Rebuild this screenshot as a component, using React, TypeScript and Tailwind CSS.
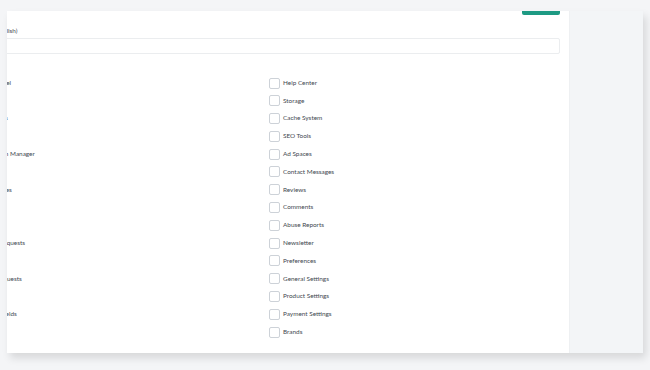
import React from "react";

const left = [
  "Shipping Panel",
  "Orders",
  "Subscriptions",
  "Users",
  "Configuration Manager",
  "Roles",
  "Top Categories",
  "Blog",
  "Media",
  "Withdraw Requests",
  "Staff",
  "Payment Requests",
  "Pages",
  "Additional Fields",
  "Themes",
];

const right = [
  "Help Center",
  "Storage",
  "Cache System",
  "SEO Tools",
  "Ad Spaces",
  "Contact Messages",
  "Reviews",
  "Comments",
  "Abuse Reports",
  "Newsletter",
  "Preferences",
  "General Settings",
  "Product Settings",
  "Payment Settings",
  "Brands",
];

function Item({ label }: { label: string }) {
  return (
    <div className="flex h-[11px] items-center">
      <span className="h-[11px] w-[11px] shrink-0 rounded-[2px] border border-[#cdd2d8] bg-white" />
      <span className="ml-[3px] whitespace-nowrap text-[6.4px] leading-none text-[#42484f]">
        {label}
      </span>
    </div>
  );
}

export default function App() {
  return (
    <div
      className="h-[370px] w-[650px] overflow-hidden bg-[#f4f5f7] pl-[7px] pt-[11px]"
      style={{ fontFamily: "Lato, 'Noto Sans', sans-serif" }}
    >
      <div className="flex h-[342px] w-[636px] shadow-[3px_5px_8px_rgba(0,0,0,0.12)]">
        <div className="relative h-full w-[562px] overflow-hidden bg-white">
          <div className="ml-[-51px] mt-[-20px] w-[604px]">
            <div className="flex justify-end">
              <div className="h-[24px] w-[38px] rounded-b-[2px] bg-[#1d9a83]" />
            </div>
            <div className="mt-[12px] flex h-[8px] items-center">
              <span className="ml-[20px] text-[6.4px] leading-none text-[#42484f]">
                Name (English)
              </span>
            </div>
            <div className="mt-[3px] h-[16px] w-full rounded-[2px] border border-[#ebedef] bg-white" />
            <div className="mt-[23.5px] grid grid-cols-[313px_1fr]">
              <div className="flex flex-col gap-[6.8px]">
                {left.map((l) => (
                  <Item key={l} label={l} />
                ))}
              </div>
              <div className="flex flex-col gap-[6.8px]">
                {right.map((l) => (
                  <Item key={l} label={l} />
                ))}
              </div>
            </div>
          </div>
        </div>
        <div className="h-full w-[74px] border-l border-[#eef0f2] bg-[#f3f5f7]" />
      </div>
    </div>
  );
}
